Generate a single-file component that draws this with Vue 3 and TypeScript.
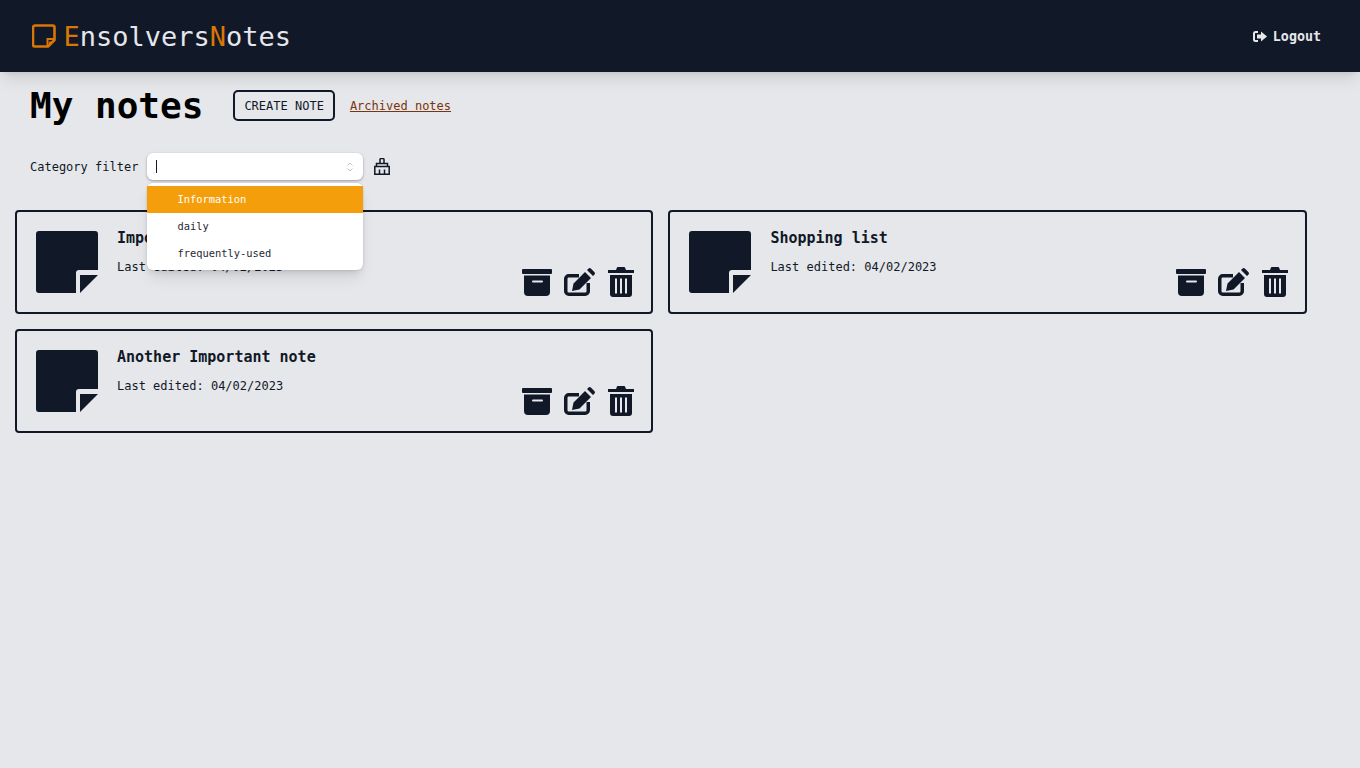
<script setup lang="ts">
interface Note {
  id: number
  title: string
  edited: string
}

const notes: Note[] = [
  { id: 1, title: 'Important note', edited: '04/02/2023' },
  { id: 2, title: 'Shopping list', edited: '04/02/2023' },
  { id: 3, title: 'Another Important note', edited: '04/02/2023' },
]

const categories = ['Information', 'daily', 'frequently-used']
</script>

<template>
  <div class="page">
    <header class="navbar">
      <div class="brand">
        <svg class="brand-icon" viewBox="0 0 24 24">
          <path d="M3.500 1.500h17a2 2 0 0 1 2 2v12.500l-6.500 6.500h-13a2 2 0 0 1-2-2v-17a2 2 0 0 1 2-2z" fill="none" stroke="currentColor" stroke-width="2.600" stroke-linejoin="round"/>
          <path d="M15.500 22v-7h7" fill="none" stroke="currentColor" stroke-width="2"/>
          <path d="M17 17.500h4L17 21.500z" fill="currentColor"/>
        </svg>
        <span class="brand-name"><em>E</em>nsolvers<em>N</em>otes</span>
      </div>
      <button class="logout" type="button">
        <svg viewBox="0 0 14 11">
          <path d="M5 1H2.500A1.500 1.500 0 0 0 1 2.500v6A1.500 1.500 0 0 0 2.500 10H5" fill="none" stroke="currentColor" stroke-width="2"/>
          <path d="M4 3.500h4V.5l6 5-6 5v-3H4z" fill="currentColor"/>
        </svg>
        Logout
      </button>
    </header>

    <main class="content">
      <div class="heading">
        <h1>My notes</h1>
        <button class="create" type="button">CREATE NOTE</button>
        <a class="archived" href="#">Archived notes</a>
      </div>

      <div class="filter">
        <label>Category filter</label>
        <div class="select">
          <div class="select-box">
            <span class="caret"></span>
            <svg class="chevrons" viewBox="0 0 6 10">
              <path d="M.5 3.500L3 1l2.500 2.500M.5 6.500L3 9l2.500-2.500" fill="none" stroke="currentColor" stroke-width="1"/>
            </svg>
          </div>
          <ul class="menu">
            <li v-for="(cat, i) in categories" :key="cat" :class="{ active: i === 0 }">{{ cat }}</li>
          </ul>
        </div>
        <svg class="clear" viewBox="0 0 16 17">
          <path d="M6 5.500V1.500a.9.9 0 0 1 .9-.9h2.200a.9.9 0 0 1 .9.9v4" fill="none" stroke="currentColor" stroke-width="1.500"/>
          <path d="M2.500 8.500V5.500h11v3" fill="none" stroke="currentColor" stroke-width="1.500"/>
          <path d="M.8 8.500h14.400v7.700H.8z" fill="none" stroke="currentColor" stroke-width="1.500"/>
          <path d="M5.500 11.500v5M10.500 11.500v5" fill="none" stroke="currentColor" stroke-width="1.500"/>
        </svg>
      </div>

      <section class="notes">
        <article v-for="note in notes" :key="note.id" class="note">
          <svg class="note-icon" viewBox="0 0 62 62">
            <path d="M3 0h56a3 3 0 0 1 3 3v36H43a3 3 0 0 0-3 3v20H3a3 3 0 0 1-3-3V3a3 3 0 0 1 3-3z" fill="currentColor"/>
            <path d="M44 44h18L44 62z" fill="currentColor"/>
          </svg>
          <div class="note-info">
            <h2>{{ note.title }}</h2>
            <p>Last edited: {{ note.edited }}</p>
          </div>
          <div class="actions">
            <svg class="archive" viewBox="0 0 30 27">
              <rect x="0" y="0" width="30" height="5" rx="1" fill="currentColor"/>
              <path fill-rule="evenodd" d="M2 6.500h26V23a4 4 0 0 1-4 4H6a4 4 0 0 1-4-4zm9 5a1 1 0 0 0 0 2h9a1 1 0 0 0 0-2z" fill="currentColor"/>
            </svg>
            <svg class="edit" viewBox="0 0 31 28">
              <path d="M15 7.750H4.750a3 3 0 0 0-3 3v12.500a3 3 0 0 0 3 3h16.500a3 3 0 0 0 3-3V15" fill="none" stroke="currentColor" stroke-width="3.500"/>
              <path d="M8 23l1.500-7.500L21 4l6 6-11.500 11.500zM23 2l1.300-1.300a2 2 0 0 1 2.800 0l3.200 3.200a2 2 0 0 1 0 2.800L29 8z" fill="currentColor"/>
            </svg>
            <svg class="trash" viewBox="0 0 26 30">
              <path d="M0 3h8l1-2.500a1 1 0 0 1 1-.5h6a1 1 0 0 1 1 .5L18 3h8v3H0z" fill="currentColor"/>
              <path fill-rule="evenodd" d="M2 8h22v19a3 3 0 0 1-3 3H5a3 3 0 0 1-3-3zm5 3.500v15h2v-15zm5 0v15h2v-15zm5 0v15h2v-15z" fill="currentColor"/>
            </svg>
          </div>
        </article>
      </section>
    </main>
  </div>
</template>

<style>
html,
body {
  margin: 0;
  background: #e5e7eb;
}
</style>

<style scoped>
.page {
  min-height: 768px;
  background: #e5e7eb;
  font-family: "DejaVu Sans Mono", monospace;
  color: #111827;
}

.navbar {
  height: 72px;
  box-sizing: border-box;
  padding: 0 39px 0 32px;
  display: flex;
  align-items: center;
  justify-content: space-between;
  background: #111827;
  box-shadow: 0 10px 15px -3px rgba(0, 0, 0, 0.1), 0 4px 6px -4px rgba(0, 0, 0, 0.1);
}

.brand {
  display: flex;
  align-items: center;
  gap: 7.500px;
  color: #e5e7eb;
}

.brand-icon {
  width: 24px;
  height: 24px;
  color: #d97706;
}

.brand-name {
  margin-top: 2px;
  font-size: 27px;
  line-height: 36px;
}

.brand-name em {
  font-style: normal;
  color: #d97706;
}

.logout {
  display: flex;
  align-items: center;
  gap: 6px;
  padding: 0;
  border: 0;
  background: none;
  color: #e5e7eb;
  font-family: inherit;
  font-size: 13.333px;
  font-weight: 700;
}

.logout svg {
  width: 14px;
  height: 11px;
}

.content {
  padding: 14px 15px 0;
}

.heading {
  display: flex;
  align-items: center;
  padding-left: 15px;
  height: 40px;
}

.heading h1 {
  margin: 0 30px 0 0;
  font-size: 36px;
  line-height: 40px;
  font-weight: 700;
  color: #000;
}

.create {
  height: 31px;
  width: 101.500px;
  padding: 0;
  border: 2px solid #111827;
  border-radius: 5px;
  background: none;
  color: #111827;
  font-family: inherit;
  font-size: 12px;
  margin: 0 15px 1px 0;
}

.archived {
  font-size: 12px;
  color: #78350f;
  text-decoration: underline;
}

.filter {
  display: flex;
  align-items: center;
  margin-top: 27px;
  padding-left: 15px;
  height: 27px;
  font-size: 12px;
}

.filter label {
  width: 117px;
}

.select {
  position: relative;
  width: 216px;
}

.select-box {
  height: 27px;
  box-sizing: border-box;
  padding: 0 10px 0 9px;
  display: flex;
  align-items: center;
  justify-content: space-between;
  background: #fff;
  border-radius: 6px;
  box-shadow: 0 1px 3px rgba(0, 0, 0, 0.25), 0 1px 2px rgba(0, 0, 0, 0.1);
}

.caret {
  width: 1px;
  height: 13px;
  background: #111827;
}

.chevrons {
  width: 6px;
  height: 10px;
  color: #c4c7cd;
}

.menu {
  position: absolute;
  top: 30px;
  left: 0;
  right: 0;
  z-index: 10;
  margin: 0;
  padding: 3px 0;
  list-style: none;
  background: #fff;
  border-radius: 6px;
  box-shadow: 0 10px 15px -3px rgba(0, 0, 0, 0.1), 0 4px 6px -2px rgba(0, 0, 0, 0.1), 0 0 2px rgba(0, 0, 0, 0.15);
  font-size: 10.400px;
}

.menu li {
  height: 27px;
  line-height: 27px;
  padding-left: 30.500px;
  color: #1f2937;
}

.menu li.active {
  background: #f59e0b;
  color: #fff;
}

.clear {
  width: 16px;
  height: 17px;
  margin-left: 11px;
  color: #111827;
}

.notes {
  display: grid;
  grid-template-columns: 638.400px 638.600px;
  gap: 15px;
  margin-top: 30px;
}

.note {
  height: 104px;
  box-sizing: border-box;
  padding: 19px 17px 15px 19px;
  display: flex;
  border: 2px solid #111827;
  border-radius: 4px;
}

.note-icon {
  width: 62px;
  height: 62px;
  flex-shrink: 0;
}

.note-info {
  margin-left: 19px;
}

.note-info h2 {
  margin: -3px 0 0;
  font-size: 15px;
  line-height: 20px;
  font-weight: 700;
}

.note-info p {
  margin: 11px 0 0;
  font-size: 12px;
  line-height: 16px;
}

.actions {
  margin-left: auto;
  align-self: flex-end;
  display: flex;
  align-items: center;
  gap: 12px;
}

.archive {
  width: 30px;
  height: 27px;
}

.edit {
  width: 31px;
  height: 28px;
}

.trash {
  width: 26px;
  height: 30px;
  margin-left: 1px;
}
</style>
